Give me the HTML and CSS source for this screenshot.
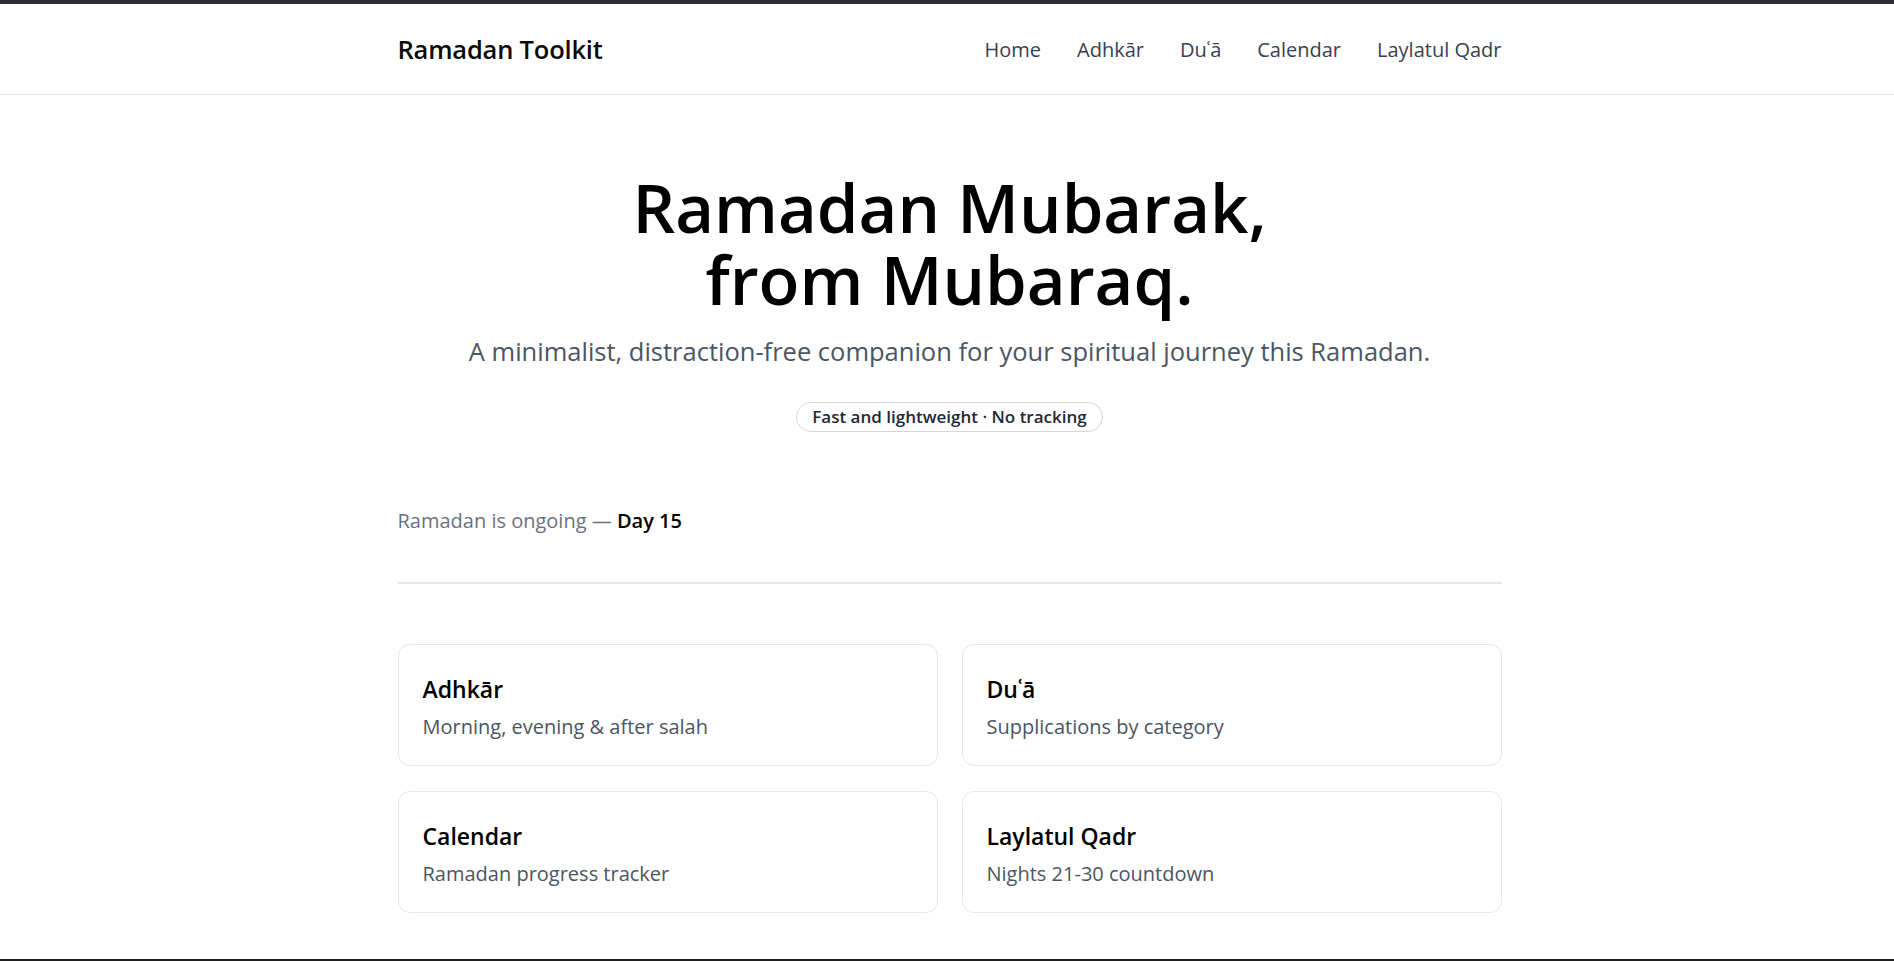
FILE: index.html
```html
<!DOCTYPE html>
<html lang="en">
<head>
<meta charset="utf-8">
<title>Ramadan Toolkit</title>
<link rel="stylesheet" href="styles.css">
</head>
<body>
<div class="frame">
  <header class="site-header">
    <div class="container header-inner">
      <a class="brand" href="#">Ramadan Toolkit</a>
      <nav class="nav">
        <a href="#">Home</a>
        <a href="#">Adhkār</a>
        <a href="#">Duʿā</a>
        <a href="#">Calendar</a>
        <a href="#">Laylatul Qadr</a>
      </nav>
    </div>
  </header>
  <main class="container">
    <section class="hero">
      <h1 class="hero-title">Ramadan Mubarak,<br>from Mubaraq.</h1>
      <p class="hero-sub">A minimalist, distraction-free companion for your spiritual journey this Ramadan.</p>
      <span class="pill">Fast and lightweight · No tracking</span>
    </section>
    <p class="status">Ramadan is ongoing — <strong>Day 15</strong></p>
    <hr class="divider">
    <section class="cards">
      <a class="card" href="#"><h2>Adhkār</h2><p>Morning, evening &amp; after salah</p></a>
      <a class="card" href="#"><h2>Duʿā</h2><p>Supplications by category</p></a>
      <a class="card" href="#"><h2>Calendar</h2><p>Ramadan progress tracker</p></a>
      <a class="card" href="#"><h2>Laylatul Qadr</h2><p>Nights 21-30 countdown</p></a>
    </section>
  </main>
</div>
</body>
</html>
```
FILE: styles.css
```css
* { box-sizing: border-box; }
html, body { margin: 0; padding: 0; }
body {
  font-family: "Open Sans", "Noto Sans", sans-serif;
  background: #ffffff;
  color: #111111;
}
a { text-decoration: none; color: inherit; }
.frame {
  min-height: 100vh;
  padding-left: 5px;
  border-top: 4px solid #2f2c37;
  border-bottom: 2px solid #1f1f1f;
}
.container {
  width: 1104px;
  margin: 0 auto;
}
.site-header {
  height: 91px;
  margin-left: -5px;
  padding-left: 5px;
  border-bottom: 1px solid #e5e7eb;
}
.header-inner {
  height: 100%;
  display: flex;
  align-items: center;
  justify-content: space-between;
}
.brand {
  font-size: 25.5px;
  font-weight: 600;
  color: #0b0b0b;
  letter-spacing: -0.2px;
}
.nav {
  display: flex;
  gap: 36px;
}
.nav a {
  font-size: 20px;
  color: #374151;
}
.hero {
  display: flex;
  flex-direction: column;
  align-items: center;
  text-align: center;
  padding-top: 76px;
}
.hero-title {
  margin: 0;
  font-size: 67px;
  line-height: 72px;
  font-weight: 600;
  color: #000;
}
.hero-sub {
  margin: 20px 0 0;
  font-size: 25.5px;
  line-height: 32px;
  color: #4b5563;
}
.pill {
  margin-top: 35px;
  display: inline-block;
  padding: 3px 15px;
  line-height: 22px;
  border: 1px solid #d4d6dc;
  border-radius: 999px;
  font-size: 17px;
  font-weight: 600;
  color: #1f2937;
}
.status {
  margin: 75px 0 0;
  font-size: 20px;
  line-height: 28px;
  color: #6b7280;
}
.status strong {
  font-weight: 600;
  color: #000;
}
.divider {
  margin: 47px 0 0;
  border: 0;
  border-top: 2px solid #e5e7eb;
}
.cards {
  margin-top: 60px;
  display: grid;
  grid-template-columns: 1fr 1fr;
  gap: 25px 24px;
}
.card {
  display: block;
  border: 1px solid #e5e7eb;
  border-radius: 12px;
  padding: 28px 24px 0;
  height: 122px;
}
.card h2 {
  margin: 0;
  font-size: 23px;
  font-weight: 600;
  color: #000;
  line-height: 32px;
}
.card p {
  margin: 8px 0 0;
  font-size: 20px;
  color: #4b5563;
  line-height: 28px;
}
```
